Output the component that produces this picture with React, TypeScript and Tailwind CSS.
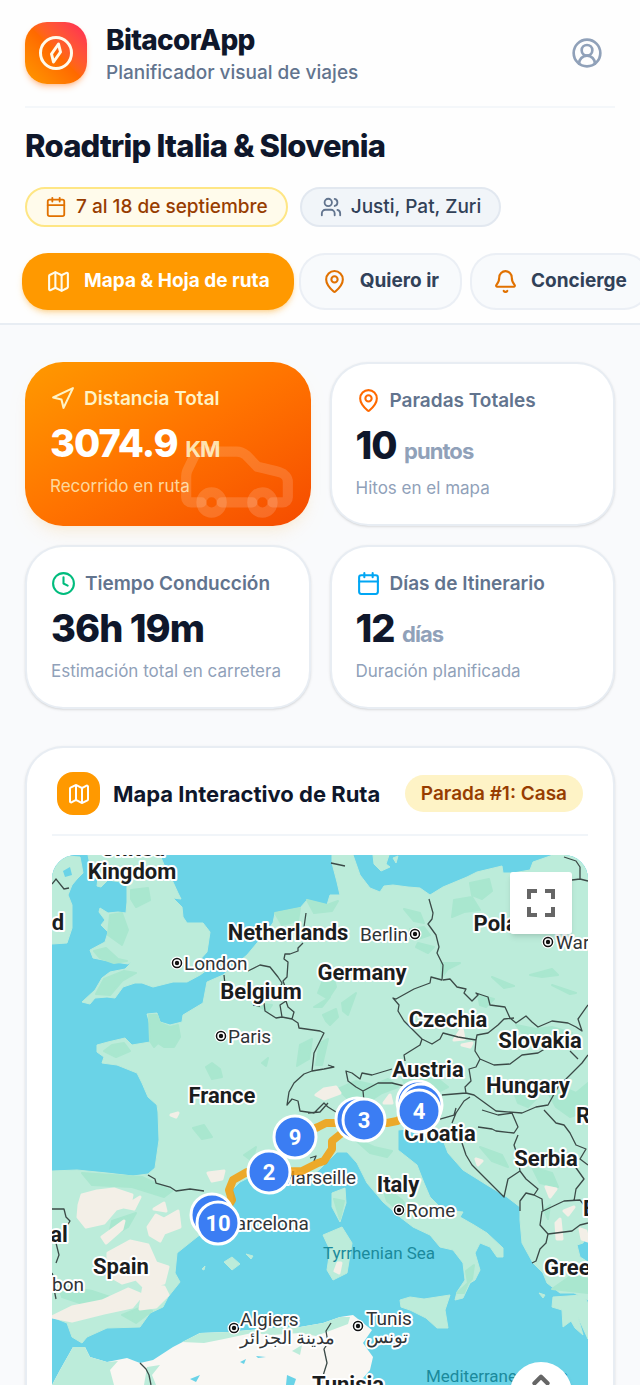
import type { ReactNode } from 'react';
import {
  Bell,
  Calendar,
  Car,
  ChevronUp,
  CircleUserRound,
  Clock,
  Map as MapIcon,
  MapPin,
  Navigation,
  Users,
  type LucideIcon,
} from 'lucide-react';

interface Tab {
  label: string;
  icon: LucideIcon;
  active?: boolean;
}

const tabs: Tab[] = [
  { label: 'Mapa & Hoja de ruta', icon: MapIcon, active: true },
  { label: 'Quiero ir', icon: MapPin },
  { label: 'Concierge', icon: Bell },
];

export default function App() {
  return (
    <div className="flex h-screen flex-col overflow-hidden bg-[#f9fafc] font-['Inter',sans-serif] text-slate-900">
      <Header />
      <main className="flex-1 overflow-y-auto px-[25px] pt-[37px] [scrollbar-width:none]">
        <section className="grid grid-cols-2 gap-[19px]">
          <DistanceCard />
          <StatCard
            icon={<MapPin size={25} className="text-orange-500" />}
            title="Paradas Totales"
            value="10"
            unit="puntos"
            note="Hitos en el mapa"
          />
          <StatCard
            icon={<Clock size={25} className="text-emerald-500" />}
            title="Tiempo Conducción"
            value="36h 19m"
            note="Estimación total en carretera"
          />
          <StatCard
            icon={<Calendar size={25} className="text-sky-500" />}
            title="Días de Itinerario"
            value="12"
            unit="días"
            note="Duración planificada"
          />
        </section>
        <MapCard />
      </main>
    </div>
  );
}

function Header() {
  return (
    <header className="shrink-0 border-b-2 border-slate-200/80 bg-[#fefefe]">
      <div className="px-[25px]">
        <div className="flex items-center border-b-2 border-slate-100/80 pb-[21px] pt-[21px]">
          <div className="flex size-[62px] items-center justify-center rounded-[22px] bg-gradient-to-tr from-[#ff9900] via-[#ff6900] to-[#ff2056] shadow-md shadow-orange-500/30">
            <CompassLogo />
          </div>
          <div className="ml-[19px] pt-[2px]">
            <p className="text-[28px] font-extrabold leading-[34px] tracking-tight">BitacorApp</p>
            <p className="mt-1 text-[19px] font-medium leading-[24px] text-slate-500">
              Planificador visual de viajes
            </p>
          </div>
          <button type="button" aria-label="Perfil" className="ml-auto p-3 text-slate-400">
            <CircleUserRound size={32} strokeWidth={2} />
          </button>
        </div>
        <h1 className="mt-[18px] text-[31px] font-extrabold leading-[40px] tracking-tight">
          Roadtrip Italia &amp; Slovenia
        </h1>
        <div className="mt-[21px] flex gap-3">
          <span className="flex h-[40px] items-center gap-[9px] rounded-full border-2 border-amber-200 bg-amber-50 px-[18px] text-[19px] font-medium text-amber-800">
            <Calendar size={22} className="text-amber-600" />7 al 18 de septiembre
          </span>
          <span className="flex h-[40px] items-center gap-[9px] rounded-full border-2 border-slate-200 bg-slate-100 px-[18px] text-[19px] font-medium text-slate-700">
            <Users size={22} className="text-slate-500" />
            Justi, Pat, Zuri
          </span>
        </div>
      </div>
      <nav className="mt-[14px] flex gap-2 overflow-hidden px-[25px] pb-[13px] pt-[12px]">
        {tabs.map(({ label, icon: Icon, active }) => (
          <button
            key={label}
            type="button"
            className={
              active
                ? '-mx-[3px] flex h-[57px] shrink-0 items-center gap-[13px] rounded-[26px] bg-[#ff9900] px-[24px] text-[19px] font-bold text-white shadow-md shadow-amber-500/30'
                : 'flex h-[57px] shrink-0 items-center gap-[13px] rounded-[26px] border-2 border-slate-200/60 bg-slate-50 px-[21px] text-[19px] font-bold text-slate-700'
            }
          >
            <Icon size={25} className={active ? 'text-amber-50' : 'text-amber-600'} />
            {label}
          </button>
        ))}
      </nav>
    </header>
  );
}

function CompassLogo() {
  return (
    <svg width="36" height="36" viewBox="0 0 36 36" fill="none" stroke="#fffbeb" strokeWidth="3" aria-hidden>
      <circle cx="18" cy="18" r="15.5" />
      <path d="M20.5 9 22.5 17 15.5 27 13.5 19Z" strokeLinejoin="round" />
    </svg>
  );
}

function DistanceCard() {
  return (
    <article className="relative overflow-hidden rounded-[38px] bg-gradient-to-br from-[#ff9900] via-[#ff7300] to-[#f54a00] px-[25px] pb-[24px] pt-[24px] text-white shadow-lg shadow-amber-500/10">
      <Car
        size={122}
        strokeWidth={2}
        className="pointer-events-none absolute -bottom-[12px] right-[13px] text-white/15"
        aria-hidden
      />
      <h2 className="flex items-center gap-[9px] text-[19px] font-semibold leading-[25px] text-amber-100">
        <Navigation size={25} />
        Distancia Total
      </h2>
      <p className="mt-[10px] text-[38px] font-extrabold leading-[44px] tracking-tight">
        3074.9 <span className="text-[22px] font-bold leading-none text-amber-100/90">KM</span>
      </p>
      <p className="mt-[9px] text-[17px] leading-[24px] text-amber-100/80">Recorrido en ruta</p>
    </article>
  );
}

interface StatCardProps {
  icon: ReactNode;
  title: string;
  value: string;
  unit?: string;
  note: string;
}

function StatCard({ icon, title, value, unit, note }: StatCardProps) {
  return (
    <article className="rounded-[38px] border-2 border-slate-200/80 bg-white px-[24px] pb-[24px] pt-[24px] shadow-sm">
      <h2 className="flex items-center gap-[9px] text-[19px] font-semibold leading-[25px] text-slate-500">
        {icon}
        {title}
      </h2>
      <p className="mt-[10px] text-[38px] font-extrabold leading-[44px] tracking-tight">
        {value} {unit && <span className="text-[22px] font-bold leading-none text-slate-400">{unit}</span>}
      </p>
      <p className="mt-[9px] text-[17px] leading-[24px] text-slate-400">{note}</p>
    </article>
  );
}

function MapCard() {
  return (
    <section className="mt-[37px] rounded-[38px] border-2 border-slate-200/80 bg-white px-[25px] pb-[25px] pt-[24px] shadow-sm">
      <div className="flex items-center border-b-2 border-slate-100 px-[5px] pb-[19px]">
        <span className="flex size-[43px] items-center justify-center rounded-[16px] bg-[#ff9900] text-white">
          <MapIcon size={24} />
        </span>
        <h2 className="ml-[13px] text-[22px] font-bold leading-[28px]">Mapa Interactivo de Ruta</h2>
        <span className="ml-auto rounded-full bg-amber-100 px-[16px] py-[6px] text-[19px] font-semibold leading-[25px] text-amber-800">
          Parada #1: Casa
        </span>
      </div>
      <div className="relative mt-[19px] h-[720px] overflow-hidden rounded-[24px] bg-[#6ad3e7]">
        <RouteMap />
        <button
          type="button"
          aria-label="Pantalla completa"
          className="absolute right-[16px] top-[17px] flex size-[62px] items-center justify-center rounded-[3px] bg-white shadow-md"
        >
          <svg width="28" height="28" viewBox="0 0 28 28" fill="none" stroke="#666" strokeWidth="4" aria-hidden>
            <path d="M2 10V2h8M18 2h8v8M26 18v8h-8M10 26H2v-8" />
          </svg>
        </button>
        <button
          type="button"
          aria-label="Controles del mapa"
          className="absolute right-[16px] top-[507px] flex size-[62px] justify-center rounded-full bg-white pt-[5px] text-[#666] shadow-md"
        >
          <ChevronUp size={26} strokeWidth={4} />
        </button>
      </div>
    </section>
  );
}

const land = [
  // Ireland
  'M0 0 28 2 31 18 25 24 20 30 16 40 20 50 20 73 15 88 0 89Z',
  // Great Britain
  'M36 0 38 10 46 23 45 31 49 32 56 25 75 28 75 47 74 58 66 57 56 58 48 53 47 57 53 65 49 70 56 77 53 87 38 95 41 103 51 105 63 107 76 109 80 107 73 114 58 117 50 123 43 135 30 147 38 149 43 143 55 142 63 143 71 132 83 128 90 128 101 132 121 127 135 127 148 120 155 115 145 108 155 97 158 77 151 68 135 68 131 62 130 52 121 43 129 44 126 38 121 27 115 17 108 0Z',
  // Continental Europe
  'M0 316 25 315 55 318 81 321 96 319 103 313 107 285 106 257 105 250 96 242 90 228 85 218 65 210 50 208 52 202 45 197 45 190 56 187 73 183 80 190 98 187 100 177 95 159 105 158 108 167 118 170 130 167 131 160 151 148 155 127 171 120 195 100 210 82 221 68 223 58 248 53 255 45 275 50 278 40 288 40 285 27 280 8 280 0 301 0 308 20 318 33 328 37 332 31 341 30 356 32 368 33 378 40 391 32 415 22 425 17 450 11 451 18 461 18 478 15 481 7 501 0 536 0 536 378 531 388 525 390 528 402 536 407 536 445 522 438 508 438 495 428 491 418 481 408 470 388 468 365 468 352 455 342 435 330 411 315 396 298 391 285 383 282 376 288 372 277 365 273 346 275 346 295 365 310 372 328 378 342 391 355 411 357 408 362 422 370 435 378 451 393 451 402 445 402 438 392 428 388 423 398 428 415 423 425 418 428 411 443 403 445 405 437 413 425 411 408 401 395 388 392 378 380 361 372 348 362 331 347 315 328 305 308 295 297 285 297 268 314 255 325 241 323 222 329 198 322 188 327 180 335 181 348 170 364 145 382 125 398 123 418 128 427 116 442 111 452 98 458 88 472 55 473 35 482 30 488 20 482 15 468 0 462Z',
  // Baltic islands
  'M321 0 337 0 334 9 338 12 329 16 322 9Z',
  'M341 3 346 1 344 8Z',
  // Corsica, Sardinia, Sicily
  'M280 338 293 333 294 348 288 367 280 352Z',
  'M271 380 290 372 300 388 295 418 281 425 275 415 278 395Z',
  'M348 445 358 442 372 444 398 440 393 455 396 473 385 473 374 463 358 455 349 452Z',
  // Balearic islands
  'M172 407 180 402 188 409 180 415Z',
  'M194 399 201 401 199 404Z',
  'M150 414 153 411 152 415Z',
  // Peloponnese
  'M501 442 531 440 536 448 536 484 526 462 531 480 523 473 519 466 511 472 510 455 500 452Z',
  'M487 438 493 440 491 443Z',
];

const africa =
  'M0 530 8 515 21 492 33 492 38 502 55 507 75 503 88 508 101 505 121 492 148 478 175 477 221 473 248 472 271 468 288 462 301 460 311 468 320 475 311 488 321 502 318 515 305 530 330 560 380 600 536 640 536 720 0 720Z';

const africaGreen = [
  'M0 530 8 515 21 492 33 492 38 502 55 507 66 506 58 515 62 530Z',
  'M130 487 148 478 175 477 221 473 248 472 271 468 288 462 298 462 296 469 280 475 264 481 248 478 220 480 200 478 172 484 152 488Z',
  'M95 512 108 510 100 520 104 530 92 530Z',
  'M240 496 250 490 248 500Z',
];

const forest = [
  'M79 35 96 33 98 45 84 52 79 44Z',
  'M58 60 70 58 76 75 70 90 56 80Z',
  'M42 96 54 93 66 104 75 106 62 108 48 103Z',
  'M52 124 72 116 84 118 70 126 58 140 44 139Z',
  'M223 58 248 53 246 66 230 70Z',
  'M255 45 275 50 286 46 280 56 262 58Z',
  'M97 160 105 160 108 168 118 172 126 170 128 182 122 192 112 192 106 188 102 192 98 186Z',
  'M60 190 72 188 78 196 64 202 52 196Z',
  'M154 212 160 208 168 214 170 222 160 224Z',
  'M210 208 216 203 214 211Z',
  'M248 190 260 184 257 204 245 211Z',
  'M271 160 284 154 286 162 278 170 274 166Z',
  'M268 188 276 184 270 210 264 210Z',
  'M200 148 220 150 216 156Z',
  'M262 152 278 142 270 152Z',
  'M271 125 281 120 284 132 276 144 266 138Z',
  'M290 148 304 138 296 160 291 156Z',
  'M418 28 437 24 440 36 430 44 420 40Z',
  'M402 45 420 42 428 55 412 57 400 62Z',
  'M352 54 368 58 372 68 362 66Z',
  'M358 74 372 72 378 80 366 84Z',
  'M366 88 382 92 376 98 364 92Z',
  'M389 108 408 108 396 114 390 122Z',
  'M440 122 462 131 452 133Z',
  'M478 120 500 114 506 120 490 122Z',
  'M500 130 524 138 518 139Z',
  'M426 140 442 144 434 152 428 150Z',
  'M464 170 484 174 500 172 520 178 500 184 484 180 470 178Z',
  'M286 234 304 226 322 230 336 224 346 232 330 238 318 246 300 248Z',
  'M350 222 368 218 386 224 396 232 384 238 370 234 356 238Z',
  'M300 282 322 292 340 296 335 302 318 298Z',
  'M462 238 476 232 484 244 476 252 466 248Z',
  'M496 238 510 232 524 238 536 228 536 256 518 262 504 252Z',
  'M428 292 450 300 456 312 440 306Z',
  'M480 312 500 318 506 332 488 328Z',
  'M330 330 350 345 362 362 350 358 335 346Z',
  'M414 416 422 410 420 424 416 428Z',
  'M405 438 416 428 412 438Z',
  'M492 355 498 350 496 364Z',
  'M141 273 152 270 160 282 150 284Z',
  'M192 300 204 292 200 306Z',
  'M30 318 90 322 120 336 112 342 80 332 40 330Z',
  'M60 366 84 358 76 372 56 384Z',
  'M6 430 40 436 70 446 40 452 10 442Z',
  'M70 460 90 452 100 456 84 468Z',
  'M282 344 292 346 288 364Z',
  'M500 434 520 420 536 424 536 438Z',
];

const dryland = [
  'M27 350 30 340 45 336 62 334 80 340 78 350 64 354 52 368 34 372 26 362Z',
  'M72 352 88 342 82 354Z',
  'M96 372 104 360 112 364 126 356 128 372 112 378 108 386 98 380Z',
  'M56 398 78 386 96 390 104 408 116 412 112 428 92 432 84 424 70 428 56 420Z',
  'M0 462 20 452 50 446 76 434 90 440 80 452 52 458 20 466Z',
  'M92 430 112 432 116 440 104 452 88 454Z',
  'M50 382 72 366 70 374 54 388Z',
  'M102 354 112 348 114 356Z',
  'M119 260 126 258 124 262Z',
  'M156 318 172 316 170 324 160 326Z',
  'M402 185 410 173 412 184Z',
  'M410 190 420 188 418 192Z',
  'M264 240 272 234 284 232 288 238 272 244Z',
  'M332 248 338 240 340 248Z',
  'M494 332 504 334 498 342Z',
  'M504 368 508 364 510 384 505 384Z',
  'M512 356 522 352 516 360Z',
  'M528 374 534 376 536 386 530 384Z',
  'M424 304 430 306 426 310Z',
  'M286 408 289 408 287 418 283 416Z',
];

const borders = [
  // Benelux and the Rhine
  'M254 58 252 72 M251 88 246 93 246 96 238 99 233 99 232 104 236 107 235 122 231 126 234 134 232 140 226 138 230 128 226 122 218 112 208 110 204 112 196 116',
  'M172 120 173 130 M201 150 208 151 M212 148 213 156 224 163 230 162 228 150 234 146 236 152 242 157 240 164 246 168 247 173 268 176 272 178 262 198 260 216 272 214 282 212 276 210 M260 216 252 219 242 228 237 237 235 250 240 244 246 246 248 256 262 258 272 248 276 252 284 257',
  'M230 162 240 164',
  // Germany, Poland, Czechia
  'M377 44 381 58 380 64 376 69 384 80 387 92 385 98 391 110 390 125 379 122 378 128 362 134 344 144 341 143 347 150 346 156 352 166 358 172 370 184 M391 125 398 124 405 132 414 134 412 138 420 146 426 140 424 138 436 142 438 150 453 152 458 163 464 168 474 161 480 167 486 172 500 166 516 168 524 172 530 176 526 164 536 150',
  'M279 8 293 11 M512 2 524 6 528 12 528 24 536 26 M520 25 528 24',
  // Austria
  'M370 184 380 189 388 184 391 178 406 182 424 185 425 180 436 178 446 170 452 164 462 163 M424 185 423 196 428 204 442 210 458 209 470 200 486 198 496 192 508 190 M370 184 368 190 352 200 353 206 M340 214 330 217 320 220 310 218 308 224 300 218 294 216 296 226 304 232 311 236 326 228 340 228 356 232',
  'M428 204 424 212 417 214 419 226 413 232 414 238 390 240 M414 238 422 240 444 256 470 258 484 252 496 250 506 232 516 222 530 208 536 200 M518 196 526 204',
  'M256 258 268 257 276 248 M311 236 312 246 300 256 288 262 M400 268 404 258 412 246 418 242',
  // The Balkans
  'M430 255 446 260 460 258 466 272 462 278 444 276 440 274 426 272 M388 264 402 260 404 253 M466 280 462 290 466 302 468 316 456 324 452 342 438 328 420 310 414 300 410 288 M492 255 504 268 512 270 518 278 524 290 534 294 528 304 536 310 M468 316 474 324 486 334 482 340 490 344 491 356 512 346 528 345 532 350 M490 356 488 370 496 379 520 376 528 370 536 368 M496 379 494 388 488 394 484 406 480 408 M482 340 474 338 468 346 468 356 M522 310 532 324 524 334 522 346',
  // Pyrenees and Portugal
  'M96 320 103 324 104 328 118 332 124 336 138 334 152 336',
  'M0 354 12 354 14 362 18 366 12 376 M4 388 7 400 4 408 M0 418 4 428 2 434 4 444 M258 303 264 301 262 306',
  // Maghreb
  'M88 508 94 514 97 520 99 530 M279 468 274 476 276 488 272 494 275 508 270 524 268 540',
];

interface Label {
  text: string;
  x: number;
  y: number;
}

const countries: Label[] = [
  { text: 'United', x: 81, y: 1 },
  { text: 'Kingdom', x: 80, y: 24 },
  { text: 'd', x: 6, y: 75 },
  { text: 'Netherlands', x: 236, y: 85 },
  { text: 'Belgium', x: 209, y: 144 },
  { text: 'Germany', x: 310, y: 125 },
  { text: 'Poland', x: 456, y: 76 },
  { text: 'Czechia', x: 396, y: 172 },
  { text: 'Slovakia', x: 488, y: 193 },
  { text: 'Austria', x: 376, y: 222 },
  { text: 'Hungary', x: 476, y: 238 },
  { text: 'France', x: 170, y: 248 },
  { text: 'Croatia', x: 388, y: 286 },
  { text: 'Serbia', x: 494, y: 311 },
  { text: 'Italy', x: 346, y: 337 },
  { text: 'Spain', x: 69, y: 419 },
  { text: 'al', x: 7, y: 387 },
  { text: 'Greece', x: 527, y: 420 },
  { text: 'Tunisia', x: 296, y: 537 },
];

const cities: Label[] = [
  { text: 'London', x: 132, y: 115 },
  { text: 'Paris', x: 176, y: 188 },
  { text: 'Berlin', x: 308, y: 86 },
  { text: 'Warsaw', x: 504, y: 94 },
  { text: 'Marseille', x: 227, y: 329 },
  { text: 'Barcelona', x: 172, y: 375 },
  { text: 'Rome', x: 354, y: 362 },
  { text: 'Algiers', x: 188, y: 471 },
  { text: 'Tunis', x: 314, y: 470 },
  { text: 'bon', x: 0, y: 436 },
];

const capitals = [
  [125, 108],
  [169, 181],
  [363, 79],
  [496, 87],
  [347, 355],
  [182, 473],
  [306, 471],
];

// drawn in order: later pins cover earlier ones, so the fully covered stops carry no number
const pins: { x: number; y: number; n?: number }[] = [
  { x: 366, y: 247 },
  { x: 369, y: 250 },
  { n: 4, x: 367, y: 256 },
  { x: 305, y: 264 },
  { n: 3, x: 312, y: 265 },
  { n: 9, x: 243, y: 282 },
  { n: 2, x: 217, y: 317 },
  { x: 160, y: 360 },
  { n: 10, x: 166, y: 368 },
];

function RouteMap() {
  return (
    <svg
      className="h-full w-full font-['Roboto',sans-serif]"
      viewBox="0 0 536 720"
      preserveAspectRatio="xMidYMin slice"
      role="img"
      aria-label="Mapa de la ruta"
    >
      <rect width="536" height="720" fill="#6ad3e7" />
      <path d={land.join('')} fill="#bcecda" stroke="#bcecda" strokeLinejoin="round" />
      <path d={africa} fill="#f9f7f3" />
      <path d={africaGreen.join('')} fill="#bcecda" />
      <path d={forest.join('')} fill="#a9e7cf" strokeLinejoin="round" stroke="#a9e7cf" strokeWidth="2" />
      <path d={dryland.join('')} fill="#f3efe7" strokeLinejoin="round" stroke="#f3efe7" strokeWidth="3" />
      <path d="M188 507 194 504 192 509ZM204 501 214 502 206 503ZM235 520 244 524 242 530 234 530ZM138 524 148 520 144 527Z" fill="#6ad3e7" />
      <path d="M11 16 18 12 20 20 13 22Z" fill="#6ad3e7" />
      <path d="M0 29 4 24 12 34 17 33" fill="none" stroke="#3b4a47" strokeWidth="1.3" />
      <path d={borders.join('')} fill="none" stroke="#3b4a47" strokeWidth="1.3" strokeLinejoin="round" />

      <g fontSize="17" fill="#1b8a9c">
        <text x="327" y="404" textAnchor="middle">Tyrrhenian Sea</text>
        <text x="374" y="527">Mediterranean Sea</text>
      </g>

      {capitals.map(([x, y]) => (
        <g key={`${x}-${y}`}>
          <circle cx={x} cy={y} r="6.5" fill="#fff" />
          <circle cx={x} cy={y} r="4.5" fill="#fff" stroke="#111" strokeWidth="1.5" />
          <circle cx={x} cy={y} r="2.2" fill="#111" />
        </g>
      ))}
      <g fontSize="19" fontWeight="400" fill="#303437" stroke="#fff" strokeWidth="4" strokeLinejoin="round" paintOrder="stroke">
        {cities.map((c) => (
          <text key={c.text} x={c.x} y={c.y}>
            {c.text}
          </text>
        ))}
        <g fontSize="18">
          <text x="188" y="489" direction="rtl" textAnchor="end">مدينة الجزائر</text>
          <text x="314" y="488" direction="rtl" textAnchor="end">تونس</text>
        </g>
      </g>
      <g fontSize="22" fontWeight="700" fill="#1b1d1e" stroke="#fff" strokeWidth="4" strokeLinejoin="round" paintOrder="stroke" textAnchor="middle">
        {countries.map((c) => (
          <text key={c.text} x={c.x} y={c.y}>
            {c.text}
          </text>
        ))}
        <text x="524" y="268" textAnchor="start">Romania</text>
        <text x="531" y="361" textAnchor="start">Bulgaria</text>
      </g>

      <g fill="none" stroke="#f59e0b" strokeOpacity="0.85" strokeWidth="8" strokeLinejoin="round" strokeLinecap="round">
        <path d="M166 368 172 358 180 345 177 335 181 325 195 317 217 317" />
        <path d="M217 317 250 316 266 308 272 306 280 294 280 286 290 278 294 270 312 265" />
        <path d="M243 282 266 272 274 268 284 268 304 264" />
        <path d="M312 265 335 268 345 266 367 256" />
      </g>
      {pins.map((p) => (
        <g key={`${p.x}-${p.y}`}>
          <circle cx={p.x} cy={p.y} r="21" fill="#3b7df3" stroke="#fff" strokeWidth="3" />
          {p.n && (
            <text x={p.x} y={p.y + 8} textAnchor="middle" fontSize="22" fontWeight="700" fill="#fff">
              {p.n}
            </text>
          )}
        </g>
      ))}
    </svg>
  );
}
